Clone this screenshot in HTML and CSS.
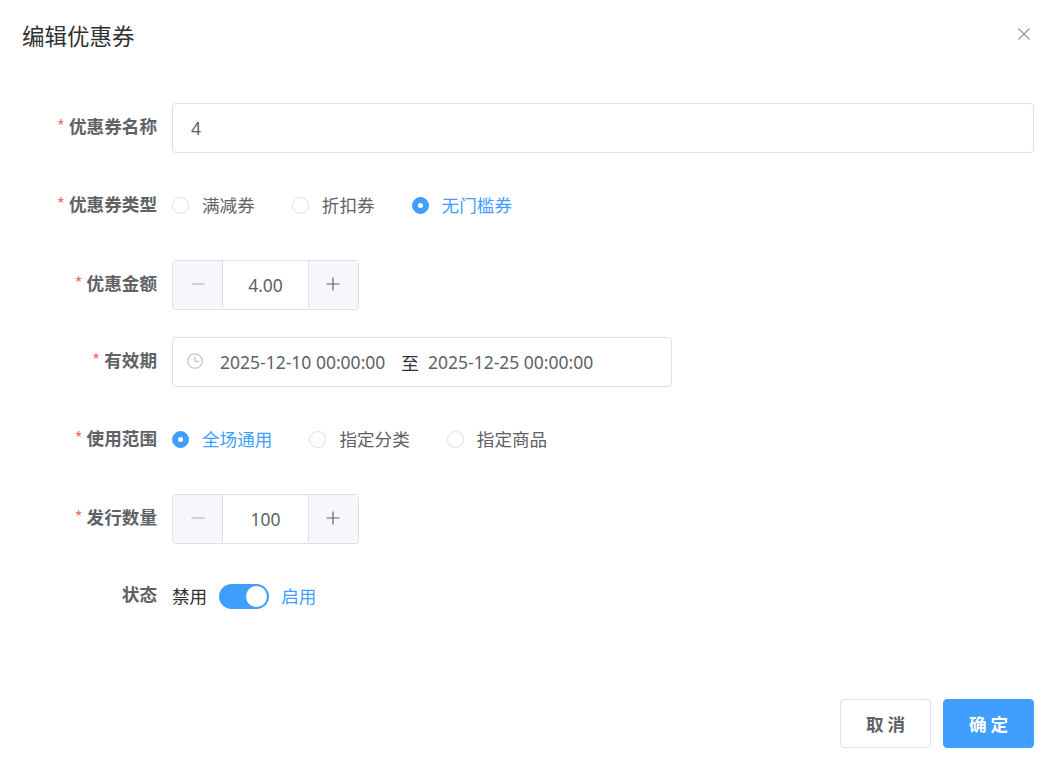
FILE: index.html
```html
<!DOCTYPE html>
<html lang="zh-CN">
<head>
<meta charset="utf-8">
<title>编辑优惠券</title>
<link rel="stylesheet" href="styles.css">
</head>
<body>
<div class="dialog">
  <header class="head">
    <h1 class="title">编辑优惠券</h1>
    <button class="close" aria-label="关闭">
      <svg width="14" height="14" viewBox="0 0 14 14"><path d="M1.5 1.5 12.5 12.5M12.5 1.5 1.5 12.5" stroke="#909399" stroke-width="1.1" fill="none"/></svg>
    </button>
  </header>
  <form class="form">
    <div class="row">
      <label class="label req">优惠券名称</label>
      <div class="input wide">4</div>
    </div>
    <div class="row">
      <label class="label req">优惠券类型</label>
      <div class="radios">
        <span class="radio"><i class="dot"></i>满减券</span>
        <span class="radio"><i class="dot"></i>折扣券</span>
        <span class="radio on"><i class="dot"></i>无门槛券</span>
      </div>
    </div>
    <div class="row row-num">
      <label class="label req">优惠金额</label>
      <div class="number">
        <span class="step left"><svg width="14" height="14" viewBox="0 0 14 14"><path d="M0.5 7H13.5" stroke="#a8abb2" stroke-width="1.2"/></svg></span>
        <span class="val">4.00</span>
        <span class="step right"><svg width="14" height="14" viewBox="0 0 14 14"><path d="M0.5 7H13.5M7 0.5V13.5" stroke="#606266" stroke-width="1.2"/></svg></span>
      </div>
    </div>
    <div class="row">
      <label class="label req">有效期</label>
      <div class="range">
        <svg class="clock" width="16" height="16" viewBox="0 0 16 16"><circle cx="8" cy="8" r="7.2" fill="none" stroke="#c0c4cc" stroke-width="1.3"/><path d="M8 3.6V8.4H12" fill="none" stroke="#c0c4cc" stroke-width="1.3"/></svg>
        <span class="date">2025-12-10 00:00:00</span>
        <span class="sep">至</span>
        <span class="date">2025-12-25 00:00:00</span>
      </div>
    </div>
    <div class="row">
      <label class="label req">使用范围</label>
      <div class="radios">
        <span class="radio on"><i class="dot"></i>全场通用</span>
        <span class="radio"><i class="dot"></i>指定分类</span>
        <span class="radio"><i class="dot"></i>指定商品</span>
      </div>
    </div>
    <div class="row row-num">
      <label class="label req">发行数量</label>
      <div class="number">
        <span class="step left"><svg width="14" height="14" viewBox="0 0 14 14"><path d="M0.5 7H13.5" stroke="#a8abb2" stroke-width="1.2"/></svg></span>
        <span class="val">100</span>
        <span class="step right"><svg width="14" height="14" viewBox="0 0 14 14"><path d="M0.5 7H13.5M7 0.5V13.5" stroke="#606266" stroke-width="1.2"/></svg></span>
      </div>
    </div>
    <div class="row">
      <label class="label">状态</label>
      <div class="switch">
        <span class="sw-off">禁用</span>
        <span class="track"><i class="knob"></i></span>
        <span class="sw-on">启用</span>
      </div>
    </div>
  </form>
  <footer class="foot">
    <button class="btn">取 消</button>
    <button class="btn primary">确 定</button>
  </footer>
</div>
</body>
</html>
```
FILE: styles.css
```css
* { box-sizing: border-box; }
html, body { margin: 0; height: 100%; }
body {
  background: #fff;
  color: #606266;
  font-family: "Noto Sans", "Noto Sans CJK SC", sans-serif;
  font-size: 17.5px;
}
.dialog { width: 1052px; height: 768px; display: flex; flex-direction: column; padding: 0 18px 20px 22px; overflow: hidden; }
.head { height: 72px; flex: none; display: flex; align-items: center; justify-content: space-between; padding-right: 3px; }
.title { margin: -2px 0 0; font-size: 22.5px; font-weight: 400; color: #303133; font-family: "Noto Sans CJK SC", sans-serif; }
.close { border: 0; background: none; padding: 0; width: 14px; height: 14px; display: block; margin-top: -5px; }
.close svg { display: block; }
.form { margin-top: 31px; display: flex; flex-direction: column; gap: 28px; flex: 1; }
.row { display: flex; height: 50px; align-items: center; }
.row-num { margin-top: 1px; margin-bottom: -1px; }
.row-num .label { margin-top: -6px; }
.label { width: 135px; margin-right: 15px; flex: none; text-align: right; font-size: 17.6px; font-weight: 700; color: #606266; font-family: "Noto Sans CJK SC", sans-serif; margin-top: -5px; white-space: nowrap; }
.req::before { content: "*"; color: #f56c6c; margin-right: 4px; font-weight: 400; }
.input { height: 50px; border: 1px solid #dcdfe6; border-radius: 4px; display: flex; align-items: center; padding: 0 18px; }
.wide { flex: 1; }
.radios { display: flex; gap: 37px; margin-top: -4px; }
.radio { display: inline-flex; align-items: center; gap: 13px; font-size: 17.6px; font-family: "Noto Sans CJK SC", sans-serif; }
.dot { width: 17px; height: 17px; border-radius: 50%; border: 1px solid #dcdfe6; background: #fff; flex: none; position: relative; margin-top: 2px; }
.on { color: #409eff; }
.on .dot { background: #409eff; border-color: #409eff; }
.on .dot::after { content: ""; position: absolute; left: 5px; top: 5px; width: 5px; height: 5px; border-radius: 50%; background: #fff; }
.number { width: 187px; height: 50px; border: 1px solid #dcdfe6; border-radius: 4px; display: flex; overflow: hidden; }
.step { width: 50px; flex: none; background: #f5f7fa; display: flex; align-items: center; justify-content: center; margin-bottom: 1px; }
.step.left { border-right: 1px solid #dcdfe6; padding-bottom: 2px; }
.step.right { width: 50px; border-left: 1px solid #dcdfe6; padding: 0 2px 2px 0; }
.val { flex: 1; display: flex; align-items: center; justify-content: center; }
.range { width: 500px; height: 50px; border: 1px solid #dcdfe6; border-radius: 4px; display: flex; align-items: center; padding-left: 14px; }
.clock { flex: none; margin-right: 17px; margin-top: -3px; }
.date { white-space: nowrap; }
.sep { color: #303133; margin: 0 9px 0 16px; font-size: 17.6px; font-family: "Noto Sans CJK SC", sans-serif; }
.switch { display: flex; align-items: center; font-size: 17.6px; font-family: "Noto Sans CJK SC", sans-serif; }
.sw-off { color: #303133; margin: -2px 12px 0 0; }
.sw-on { color: #409eff; margin: -2px 0 0 12px; }
.track { width: 50px; height: 25px; border-radius: 13px; background: #409eff; position: relative; display: block; margin-top: 1px; }
.knob { position: absolute; right: 2px; top: 2px; width: 21px; height: 21px; border-radius: 50%; background: #fff; }
.foot { display: flex; justify-content: flex-end; gap: 12px; flex: none; }
.btn { width: 91px; height: 49px; border: 1px solid #dcdfe6; border-radius: 4px; background: #fff; color: #606266; font-size: 17.6px; font-weight: 700; font-family: "Noto Sans CJK SC", sans-serif; padding: 0; }
.primary { background: #409eff; border-color: #409eff; color: #fff; }
```
